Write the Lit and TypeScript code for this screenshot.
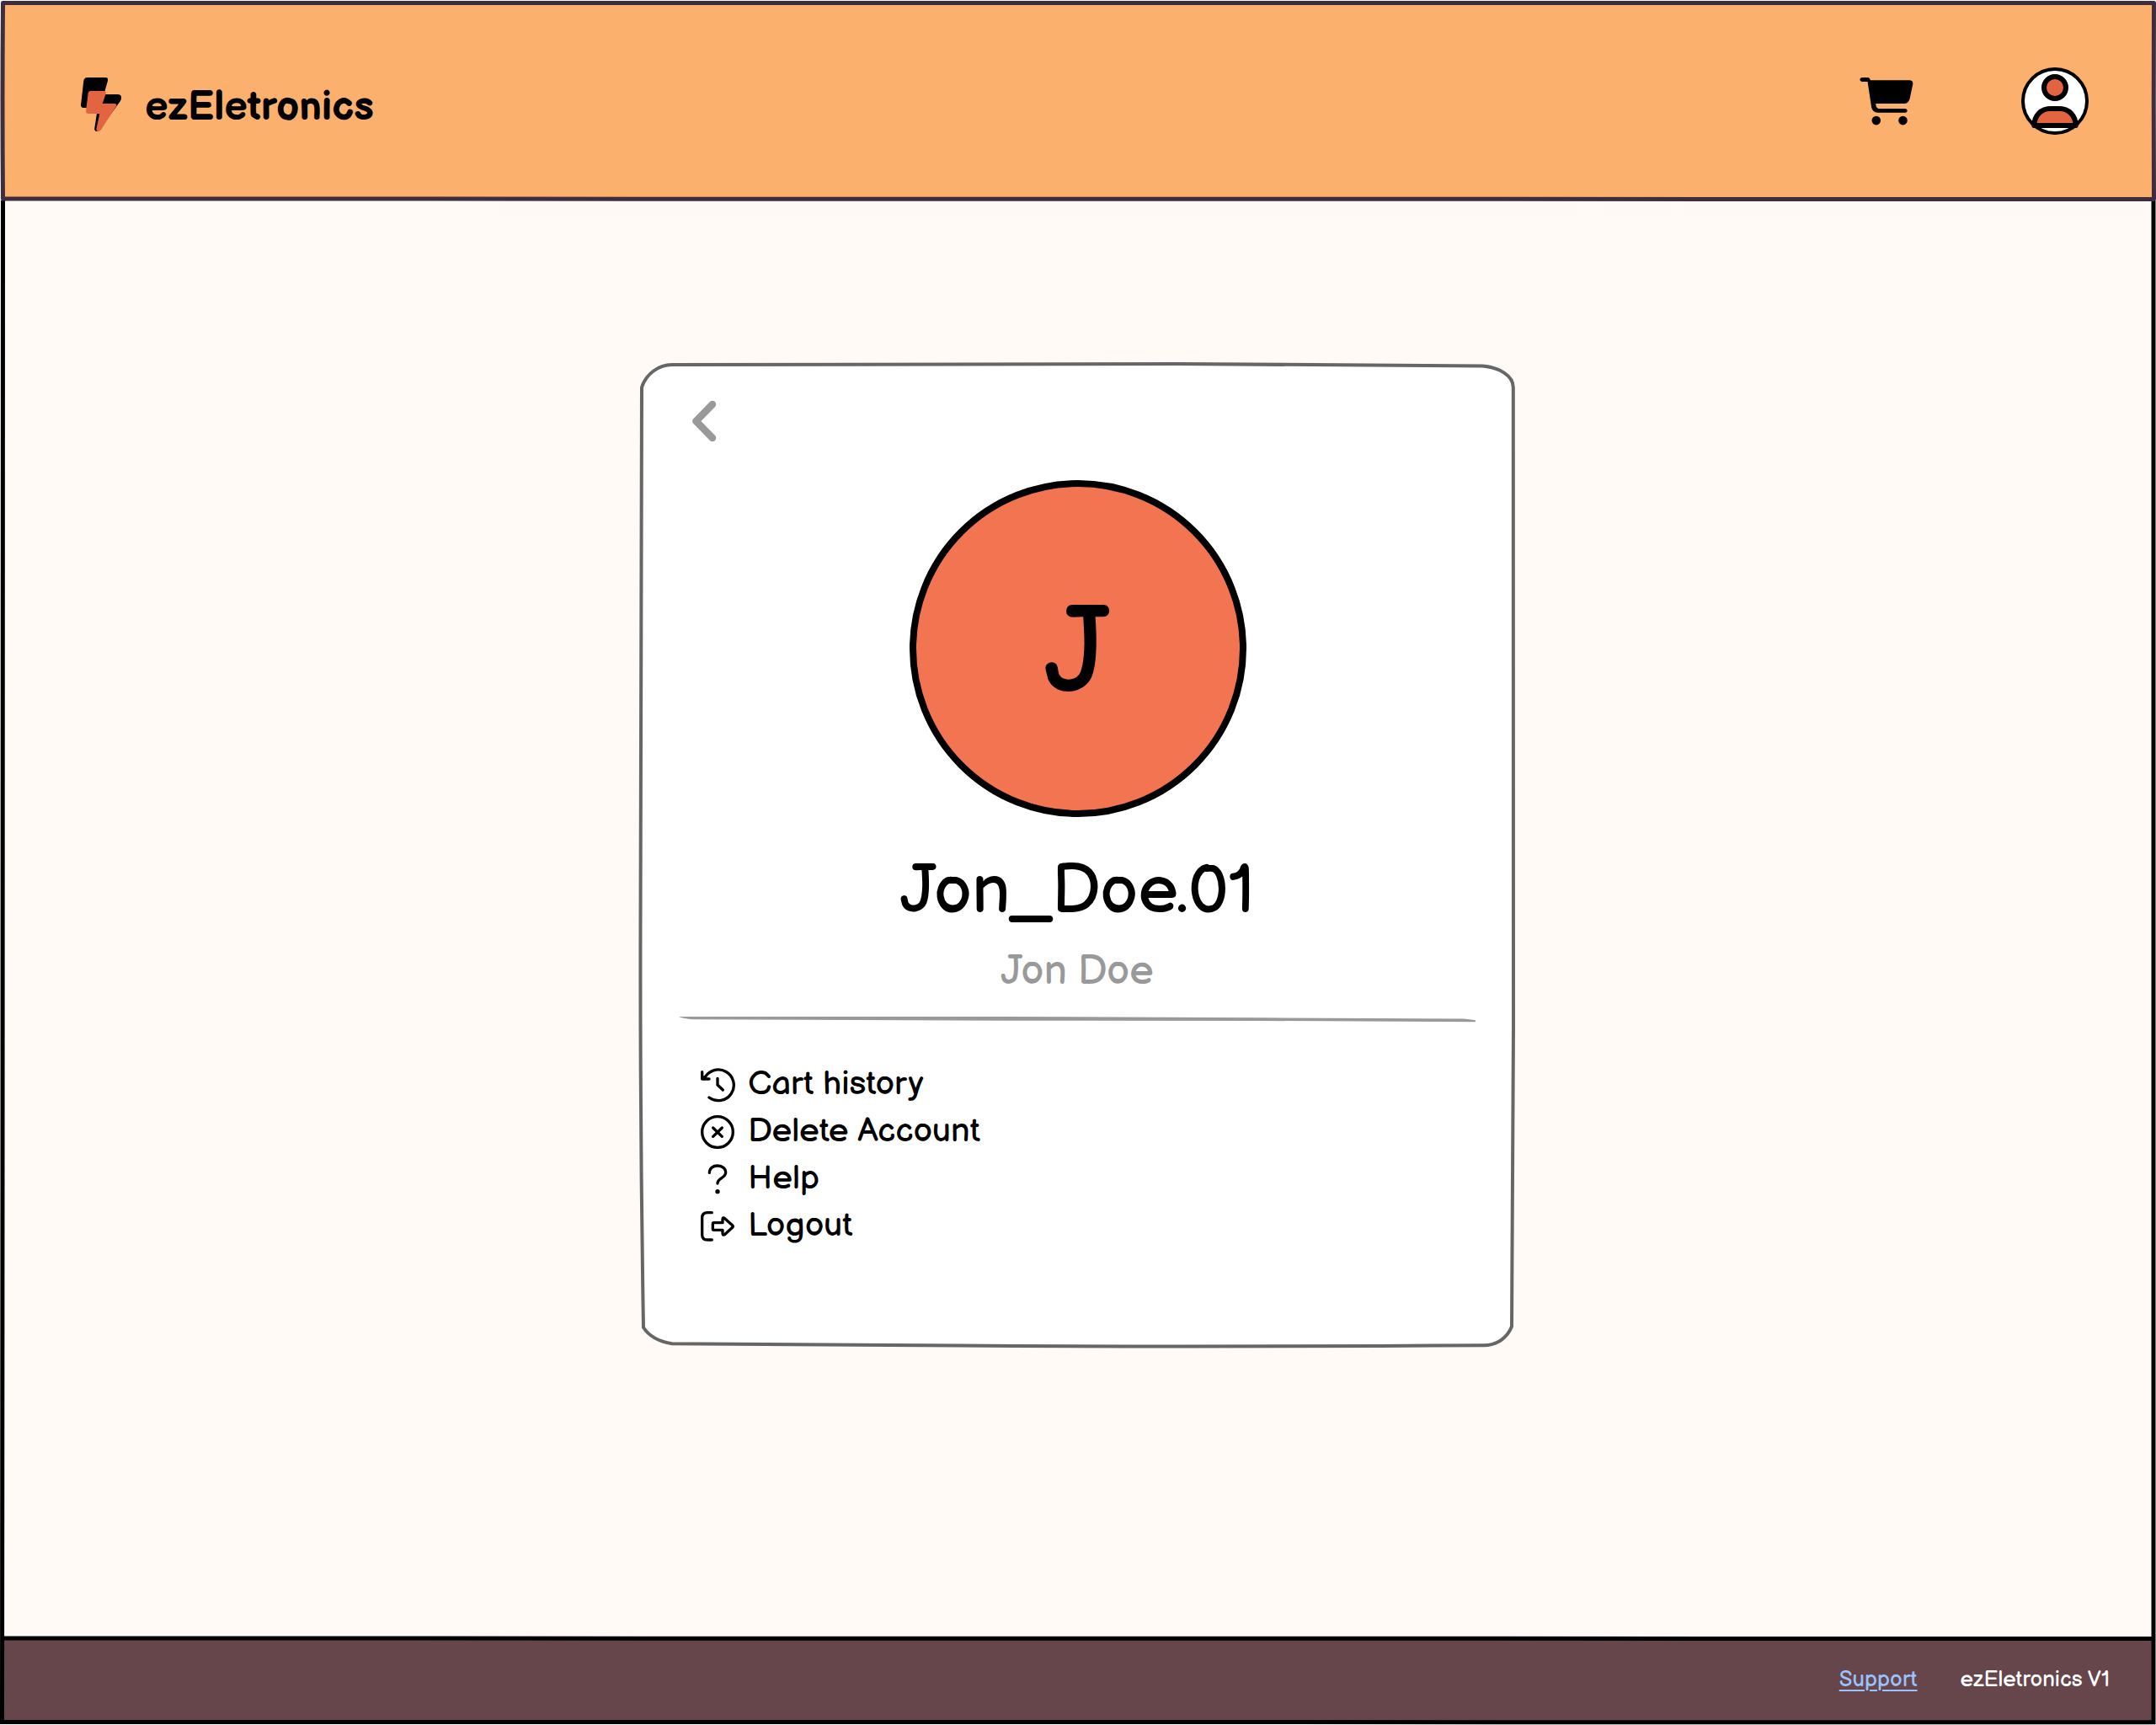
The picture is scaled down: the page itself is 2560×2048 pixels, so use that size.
import { LitElement, html, css, svg, type TemplateResult } from "lit";
import { customElement, property } from "lit/decorators.js";

const icons: Record<string, TemplateResult> = {
  history: svg`
    <path d="M13 38A55 55 0 1 1 30 105"/>
    <path d="M5 14V39H30M6 39L13 32"/>
    <path d="M60 37V60L79 78"/>`,
  remove: svg`
    <circle cx="60" cy="60" r="55"/>
    <path d="M44 45L76 76M76 45L44 76"/>`,
  help: svg`
    <path d="M31 37C32 20 44 12 60 12C77 12 89 22 89 37C89 56 60 56 60 75"/>
    <circle class="dot" cx="60" cy="104" r="8"/>`,
  logout: svg`
    <path d="M40 11H24Q5 11 5 30V89Q5 108 24 108H40"/>
    <path d="M47 47H78V35Q79 26 86 32L113 56Q117 60 113 64L87 88Q79 94 78 85V73H47Q43 73 43 69V51Q43 47 47 47Z"/>`,
};

const menu = [
  { icon: "history", label: "Cart history" },
  { icon: "remove", label: "Delete Account" },
  { icon: "help", label: "Help" },
  { icon: "logout", label: "Logout" },
];

@customElement("menu-item")
class MenuItem extends LitElement {
  @property() icon = "";
  @property() label = "";

  static styles = css`
    :host { display: flex; align-items: center; gap: 16px; height: 56px; }
    .icon {
      width: 40px; height: 40px; overflow: visible; fill: none; stroke: #000;
      stroke-width: 10; stroke-linecap: round; stroke-linejoin: round;
    }
    .dot { fill: #000; stroke: none; }
    .label { font-size: 40px; line-height: 48px; white-space: nowrap; margin-top: -2px; }
  `;

  render() {
    return html`
      <svg class="icon" viewBox="0 0 120 120">${icons[this.icon]}</svg>
      <span class="label">${this.label}</span>`;
  }
}

@customElement("app-root")
class AppRoot extends LitElement {
  static styles = css`
    :host {
      display: block; color: #000;
      font-family: "Balsamiq Sans", "Comic Neue", "Lato", sans-serif;
    }
    .page {
      position: relative; box-sizing: border-box; width: 2560px; height: 2048px;
      padding: 3px; display: flex; flex-direction: column; background: #fff; overflow: hidden;
    }
    .frame { position: absolute; inset: 0; width: 2560px; height: 2048px; fill: none; }
    .frame-outer { stroke: #000; stroke-width: 5; }
    .frame-header { stroke: #3f2d3d; stroke-width: 5; stroke-linejoin: round; }
    .header {
      flex: none; box-sizing: border-box; height: 233px; background: #fbb06d;
      display: flex; justify-content: space-between; padding: 77px 77px 0 92px;
    }
    .brand { display: flex; align-items: flex-start; gap: 27px; }
    .logo { width: 50px; height: 66.67px; margin-top: 10px; }
    .name { font-size: 48px; line-height: 58px; font-weight: 700; margin-top: 19px; }
    .actions { display: flex; align-items: flex-start; gap: 127px; }
    .cart { width: 66px; height: 60px; margin-top: 10px; }
    .user { width: 80px; height: 80px; }
    .main { flex: 1; background: #fffaf5; display: flex; justify-content: center; align-items: flex-start; padding-top: 194px; }
    .card {
      position: relative; box-sizing: border-box; width: 1040px; height: 1170px;
      padding: 45px 46px; display: flex; flex-direction: column;
    }
    .outline { position: absolute; inset: 0; width: 1040px; height: 1170px; overflow: visible; fill: #fff; stroke: #666; stroke-width: 4; }
    .body { position: relative; display: flex; flex-direction: column; align-items: center; }
    .back { align-self: flex-start; margin-left: 15px; width: 30px; height: 50px; fill: none; stroke: #999; stroke-width: 8.5; stroke-linecap: round; stroke-linejoin: round; }
    .avatar {
      box-sizing: border-box; width: 400px; height: 400px; margin-top: 45px; border: 8px solid #000;
      border-radius: 50%; background: #f27450; display: flex; align-items: center; justify-content: center;
      padding: 16px 2px 0 0; font-size: 144px; line-height: 172px;
    }
    .username { font-size: 80px; line-height: 96px; margin-top: 41px; padding-right: 2px; }
    .fullname { font-size: 48px; line-height: 58px; margin-top: 18px; padding-right: 2px; color: #999; }
    .divider { width: 948px; height: 8px; margin-top: 23px; fill: #999; }
    .menu { align-self: stretch; display: flex; flex-direction: column; padding: 46px 26px 0; }
    .footer {
      flex: none; box-sizing: border-box; height: 100px; background: #66454b; color: #fff;
      display: flex; justify-content: flex-end; gap: 51px; padding: 34px 52px 0 0;
      font-size: 26px; line-height: 32px;
    }
    .support { color: #9ac2fb; text-decoration: underline; text-decoration-thickness: 2px; text-underline-offset: 4px; }
  `;

  render() {
    return html`
      <div class="page">
        <header class="header">
          <div class="brand">
            <svg class="logo" viewBox="45 60 150 200">
              <path fill="#000" d="M71 66H137Q146 67 144 77L130 126H181Q193 127 192 140Q191 146 188 151L113 254Q107 259 102 257Q95 254 97 245L108 174H57Q48 173 48 164L58 77Q60 67 71 66Z"/>
              <path fill="#e26440" d="M83 114H130Q139 115 137 124L125 159H168Q178 160 174 168L120 252Q115 258 109 258Q103 257 103 250L115 195H73Q66 194 66 187L74 121Q76 114 83 114Z"/>
            </svg>
            <span class="name">ezEletronics</span>
          </div>
          <div class="actions">
            <svg class="cart" viewBox="80 90 200 180">
              <path d="M92 95H112Q119 95 122 105H264Q276 106 275 119L264 170Q260 188 245 189H141L143 200Q145 206 151 207H247Q255 208 255 215Q254 222 247 222H149Q130 221 126 203L112 110H92Q84 109 84 102Q85 96 92 95Z"/>
              <circle cx="143" cy="250" r="16"/>
              <circle cx="239" cy="250" r="16"/>
            </svg>
            <svg class="user" viewBox="0 0 240 240" stroke="#000" stroke-linejoin="round">
              <circle cx="120" cy="120" r="114" fill="#fff" stroke-width="12"/>
              <circle cx="120" cy="72" r="39" fill="#e26440" stroke-width="18"/>
              <path d="M46 207C46 172 71 147 102 147H138C169 147 194 172 194 207Z" fill="#e26440" stroke-width="18"/>
            </svg>
          </div>
        </header>

        <main class="main">
          <section class="card">
            <svg class="outline" viewBox="760 430 1040 1170">
              <path d="M762 460C767 444 782 433 798 433C1000 433 1200 432 1400 432C1540 432.500 1660 434 1760 434.500C1780 436 1797 446 1796.800 460Q1797.500 800 1797 1220L1795 1575C1790 1587 1779 1597 1762 1597.300Q1400 1599.500 1140 1597.500L798 1595.300C784 1593 771 1587 764 1576Q760 1340 760.500 1100Q760.500 780 762 460Z"/>
            </svg>
            <div class="body">
              <svg class="back" viewBox="0 0 30 50"><path d="M25 5L5.500 25L25 45"/></svg>
              <div class="avatar">J</div>
              <div class="username">Jon_Doe.01</div>
              <div class="fullname">Jon Doe</div>
              <svg class="divider" viewBox="806 1206 948 8">
                <path d="M806 1207L1190 1207L1500 1208.300L1738 1209.500Q1748 1210.500 1752 1211.500V1213.300L1500 1212L1190 1211.800L822 1210.300Q812 1209.500 806 1207Z"/>
              </svg>
              <nav class="menu">
                ${menu.map((m) => html`<menu-item icon=${m.icon} label=${m.label}></menu-item>`)}
              </nav>
            </div>
          </section>
        </main>

        <footer class="footer">
          <a class="support">Support</a>
          <span>ezEletronics V1</span>
        </footer>

        <svg class="frame" viewBox="0 0 2560 2048">
          <path class="frame-outer" d="M3.500 238Q3.500 900 3 1400Q2 1800 2.500 2044.500Q1280 2046 2557 2044.700L2557 238M2.500 1945Q1280 1944 2557 1945.500"/>
          <path class="frame-header" d="M3.500 3.500Q1280 3 2557.500 3.500Q2557 120 2557.500 236.500Q1280 238.500 3.500 236Q2.500 120 3.500 3.500Z"/>
        </svg>
      </div>`;
  }
}
